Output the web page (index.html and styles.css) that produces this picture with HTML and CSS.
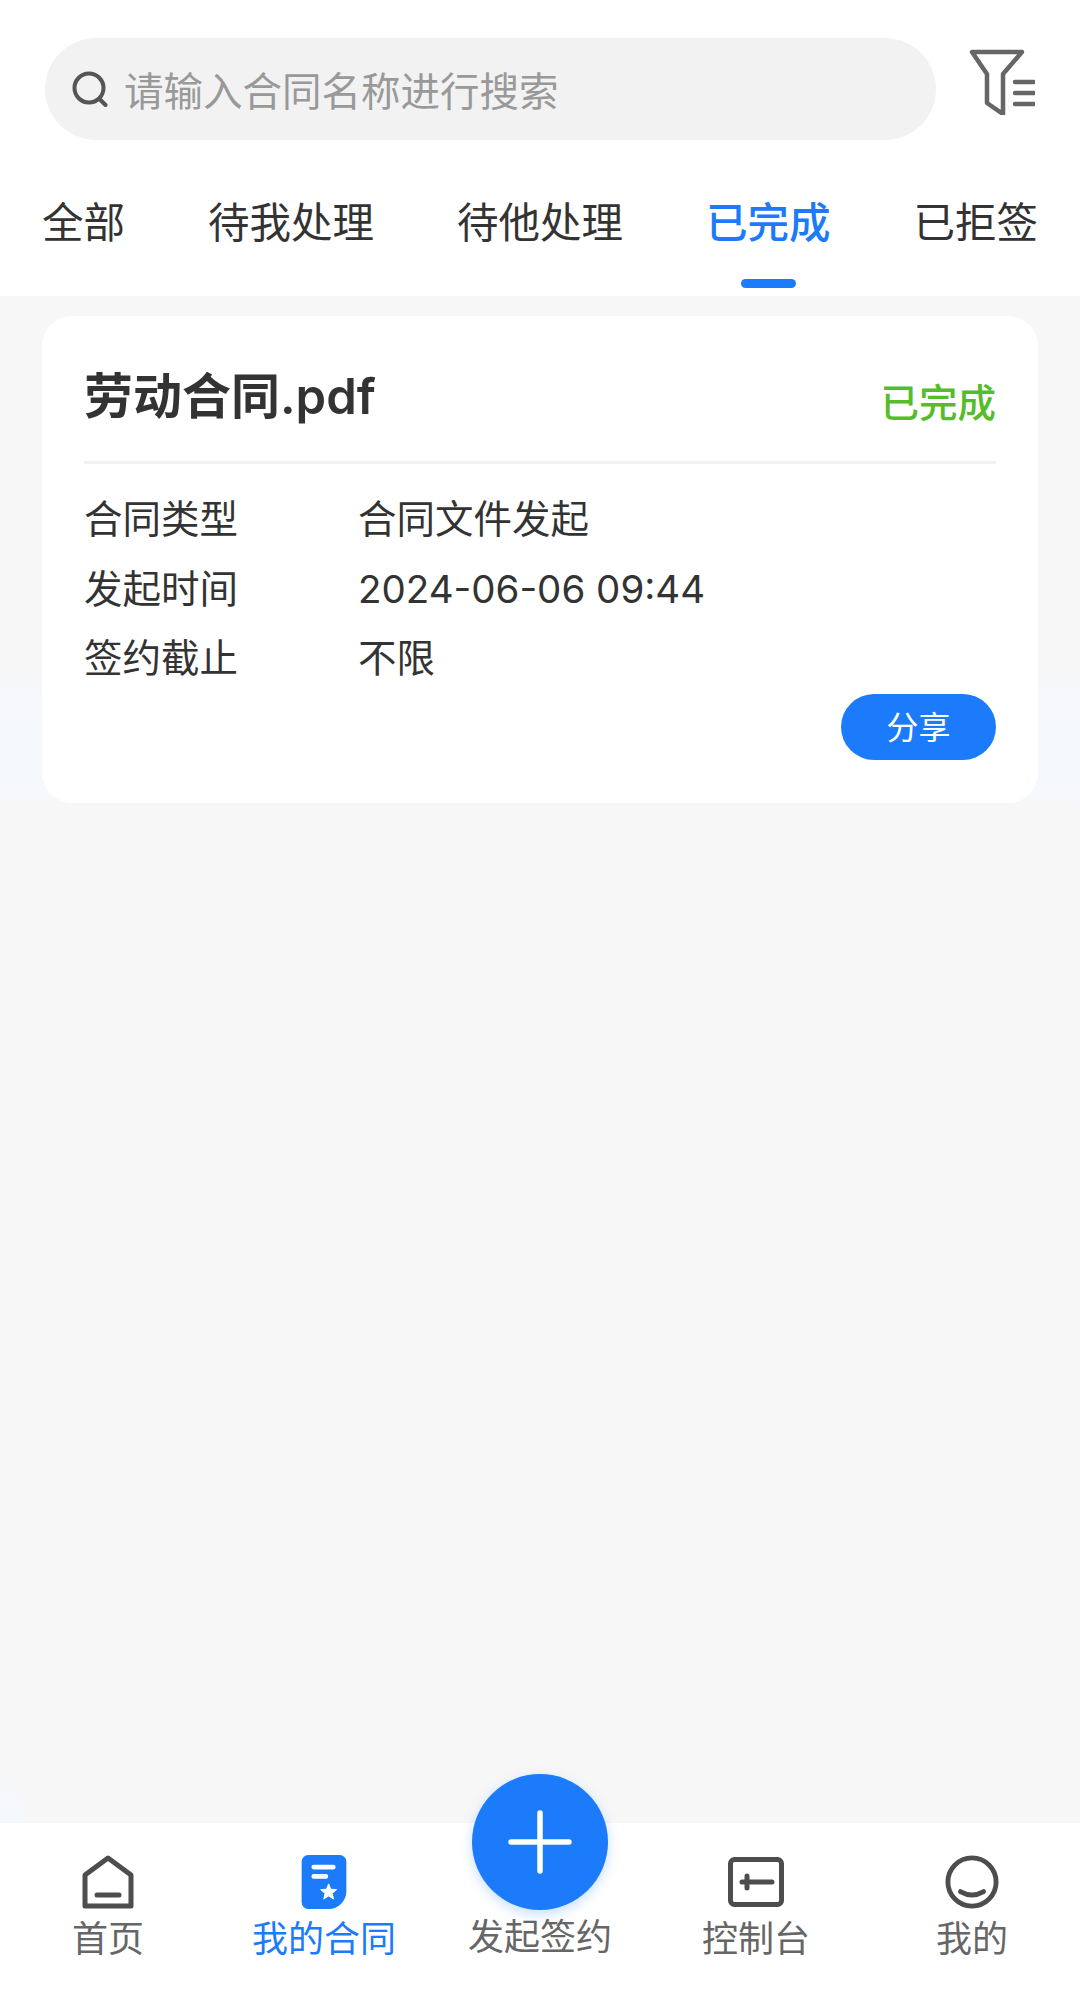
FILE: index.html
```html
<!DOCTYPE html>
<html lang="zh-CN">
<head>
    <meta charset="UTF-8">
    <meta name="viewport" content="width=device-width, initial-scale=1.0">
    <title>我的合同</title>
    <link rel="stylesheet" href="styles.css">
</head>
<body>
    <div class="page">
        <header class="top">
            <div class="search-row">
                <div class="search-box">
                    <svg class="search-icon" viewBox="0 0 36 36" fill="none" stroke="#555" stroke-width="4" stroke-linecap="round">
                        <circle cx="17" cy="17" r="14.5"/>
                        <path d="M27.5 28l6 6"/>
                    </svg>
                    <span class="placeholder">请输入合同名称进行搜索</span>
                </div>
                <svg class="filter-icon" viewBox="0 0 66 66" fill="none" stroke="#666" stroke-width="4.5" stroke-linejoin="round" stroke-linecap="round">
                    <path d="M3 3h50L34 25v40L18 54V25z"/>
                    <path d="M46 33h19M46 44h19M46 55h19"/>
                </svg>
            </div>
            <nav class="tabs">
                <span class="tab">全部</span>
                <span class="tab">待我处理</span>
                <span class="tab">待他处理</span>
                <span class="tab tab-active">已完成</span>
                <span class="tab">已拒签</span>
            </nav>
        </header>

        <main class="list">
            <section class="card">
                <div class="card-head">
                    <h2 class="card-title">劳动合同.pdf</h2>
                    <span class="card-status">已完成</span>
                </div>
                <dl class="info">
                    <div class="info-row"><dt>合同类型</dt><dd>合同文件发起</dd></div>
                    <div class="info-row"><dt>发起时间</dt><dd>2024-06-06 09:44</dd></div>
                    <div class="info-row"><dt>签约截止</dt><dd>不限</dd></div>
                </dl>
                <div class="card-actions">
                    <button class="share-btn">分享</button>
                </div>
            </section>
        </main>

        <footer class="bottom-nav">
            <div class="nav-item">
                <svg class="nav-icon" viewBox="0 0 52 54" fill="none" stroke="#4d4d4d" stroke-width="5" stroke-linejoin="round" stroke-linecap="round">
                    <path d="M26 3L49 20v31H3V20z"/>
                    <path d="M15 40h22"/>
                </svg>
                <span>首页</span>
            </div>
            <div class="nav-item nav-active">
                <svg class="nav-icon" viewBox="0 0 48 58">
                    <path d="M7 0h34a7 7 0 0 1 7 7v32a19 19 0 0 1-19 19H7a7 7 0 0 1-7-7V7a7 7 0 0 1 7-7z" fill="#1b7bfb"/>
                    <path d="M13 13h21M13 23h13" stroke="#fff" stroke-width="5" stroke-linecap="round"/>
                    <polygon points="29,31 31.35,36.76 37.6,37.2 32.8,41.2 34.3,47.3 29,44 23.7,47.3 25.2,41.2 20.4,37.2 26.65,36.76" fill="#fff" stroke="#fff" stroke-linejoin="round"/>
                </svg>
                <span>我的合同</span>
            </div>
            <div class="nav-item nav-center">
                <div class="fab">
                    <svg class="fab-plus" viewBox="0 0 64 64" stroke="#fff" stroke-width="5.5" stroke-linecap="round">
                        <path d="M32 3v58M3 32h58"/>
                    </svg>
                </div>
                <span>发起签约</span>
            </div>
            <div class="nav-item">
                <svg class="nav-icon" viewBox="0 0 56 50" fill="none" stroke="#4d4d4d" stroke-width="5" stroke-linecap="round">
                    <rect x="2.5" y="2.5" width="51" height="45" rx="4"/>
                    <path d="M14 25h30M19 19v12"/>
                </svg>
                <span>控制台</span>
            </div>
            <div class="nav-item">
                <svg class="nav-icon" viewBox="0 0 56 56" fill="none" stroke="#4d4d4d" stroke-width="5" stroke-linecap="round">
                    <circle cx="28" cy="28" r="25"/>
                    <path d="M16 38q12 7 24 0"/>
                </svg>
                <span>我的</span>
            </div>
        </footer>
    </div>
</body>
</html>
```

FILE: styles.css
```css
* {
    box-sizing: border-box;
}
body {
    margin: 0;
    background-color: #f7f7f8;
    color: #333;
    font-family: Inter, "Noto Sans CJK SC", sans-serif;
}
.page {
    width: 1080px;
    height: 2004px;
    display: flex;
    flex-direction: column;
}
.top {
    background-color: #fff;
    height: 296px;
    padding: 38px 0 0 0;
}
.search-row {
    display: flex;
    align-items: flex-start;
    padding: 0 0 0 45px;
}
.search-box {
    width: 891px;
    height: 102px;
    border-radius: 51px;
    background-color: #f2f2f2;
    display: flex;
    align-items: center;
    padding-left: 27px;
    gap: 16px;
}
.search-icon {
    width: 36px;
    height: 36px;
}
.placeholder {
    font-size: 39.5px;
    color: #999;
    padding-bottom: 2px;
}
.filter-icon {
    width: 66px;
    height: 66px;
    margin: 11px 0 0 33px;
}
.tabs {
    display: flex;
    justify-content: space-between;
    padding: 0 42px;
    margin-top: 55px;
}
.tab {
    position: relative;
    font-size: 41.5px;
    line-height: 56px;
    color: #333;
}
.tab-active {
    color: #1b7bfb;
    font-weight: 500;
}
.tab-active::after {
    content: "";
    position: absolute;
    left: 50%;
    top: 84px;
    width: 55px;
    height: 9px;
    margin-left: -27px;
    border-radius: 5px;
    background-color: #1b7bfb;
}
.list {
    flex: 1;
    padding: 20px 42px 0;
    background-image:
        linear-gradient(#f7f7f8 370px, #f5f8fd 430px, #f5f8fd 495px, #f7f7f8 510px),
        linear-gradient(#f7f7f8, #f5f8fd);
    background-repeat: no-repeat;
    background-size: 100% 510px, 22px 60px;
    background-position: 0 0, 0 100%;
}
.card {
    height: 487px;
    background-color: #fff;
    border-radius: 30px;
    padding: 0 42px;
}
.card-head {
    height: 148px;
    display: flex;
    justify-content: space-between;
    align-items: flex-start;
    border-bottom: 3px solid #f2f2f2;
}
.card-title {
    margin: 48px 0 0;
    font-size: 49px;
    line-height: 66px;
    font-weight: 600;
}
.card-status {
    margin-top: 60px;
    font-size: 38.5px;
    line-height: 54px;
    font-weight: 500;
    color: #55bd2a;
}
.info {
    margin: 21px 0 0;
}
.info-row {
    display: flex;
    font-size: 38.5px;
    line-height: 69.5px;
}
.info-row dt {
    width: 274px;
}
.info-row dd {
    margin: 0;
}
.card-actions {
    display: flex;
    justify-content: flex-end;
}
.share-btn {
    width: 155px;
    height: 66px;
    border: none;
    border-radius: 33px;
    background-color: #1b7bfb;
    color: #fff;
    font-family: inherit;
    font-size: 32px;
    padding: 0 0 4px;
}
.bottom-nav {
    height: 181px;
    background-color: #fff;
    display: grid;
    grid-template-columns: repeat(5, 216px);
}
.nav-item {
    display: flex;
    flex-direction: column;
    align-items: center;
    padding-top: 32px;
    font-size: 36px;
    color: #666;
}
.nav-item span {
    line-height: 50px;
}
.nav-icon {
    height: 54px;
    width: 56px;
    margin-bottom: 5px;
}
.nav-active {
    color: #1b7bfb;
}
.nav-center {
    position: relative;
    padding-top: 89px;
}
.fab {
    position: absolute;
    top: -49px;
    left: 40px;
    width: 136px;
    height: 136px;
    border-radius: 50%;
    background-color: #1b7bfb;
    box-shadow: 0 4px 12px rgba(27, 123, 251, 0.25);
    display: flex;
    align-items: center;
    justify-content: center;
}
.fab-plus {
    width: 64px;
    height: 64px;
}
```
